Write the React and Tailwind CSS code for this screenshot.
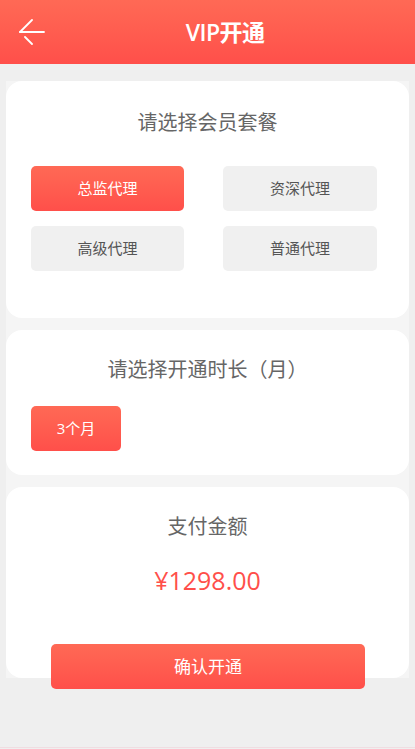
import { useState } from 'react'

const PLANS = ['总监代理', '资深代理', '高级代理', '普通代理']
const FONT = "font-['Open_Sans','Noto_Sans_CJK_SC',sans-serif]"
const RED_BG = 'bg-gradient-to-b from-[#ff6955] to-[#ff4f4a]'

function BackIcon() {
  return (
    <svg width="26" height="26" viewBox="0 0 26 26" fill="none" stroke="white" strokeWidth="1.8" strokeLinecap="round">
      <path d="M1 13 H25" />
      <path d="M1 13 L13 1" />
      <path d="M6 18 L13 25" />
    </svg>
  )
}

export default function App() {
  const [plan, setPlan] = useState(0)

  return (
    <div className={`min-h-[749px] h-[749px] flex flex-col bg-[#efefef] ${FONT}`}>
      {/* Header */}
      <div className={`h-16 shrink-0 flex items-center ${RED_BG}`}>
        <button type="button" className="w-[35px] pl-[19px] shrink-0">
          <BackIcon />
        </button>
        <h1 className="flex-1 text-center text-[23px] text-white font-semibold tracking-tight">VIP开通</h1>
      </div>

      <div className="mx-[6px] mt-[17px] bg-[#f5f5f5] flex flex-col gap-3">
        {/* Plans */}
        <div className="bg-white rounded-[16px] h-[237px] pt-[28px] pl-[25px]">
          <div className="text-center text-[20px] leading-7 text-[#666] pr-[25px]">请选择会员套餐</div>
          <div className="mt-[29px] grid grid-cols-[153px_154px] gap-x-[39px] gap-y-[15px]">
            {PLANS.map((p, i) => (
              <button
                key={p}
                type="button"
                onClick={() => setPlan(i)}
                className={`h-[45px] rounded-[5px] text-[15px] ${i === plan ? `${RED_BG} text-white` : 'bg-[#f0f0f0] text-[#555]'}`}
              >
                {p}
              </button>
            ))}
          </div>
        </div>

        {/* Duration */}
        <div className="bg-white rounded-[16px] h-[145px] pt-[26px] px-[25px]">
          <div className="text-center text-[20px] leading-7 text-[#666]">请选择开通时长（月）</div>
          <button type="button" className={`mt-[22px] w-[90px] h-[45px] rounded-[5px] text-[15px] text-white ${RED_BG}`}>
            3个月
          </button>
        </div>

        {/* Amount */}
        <div className="bg-white rounded-[16px] h-[191px] pt-[26px]">
          <div className="text-center text-[20px] leading-7 text-[#666]">支付金额</div>
          <div className="mt-[23px] text-center text-[25px] leading-8 text-[#ff4f4a]">¥1298.00</div>
          <button
            type="button"
            className={`mt-[48px] ml-[45px] w-[314px] h-[45px] rounded-[5px] text-[17px] text-white ${RED_BG}`}
          >
            确认开通
          </button>
        </div>
      </div>

      <div className="flex-1" />
      <div className="h-px bg-[#f0dde1]" />
      <div className="h-px" />
    </div>
  )
}
